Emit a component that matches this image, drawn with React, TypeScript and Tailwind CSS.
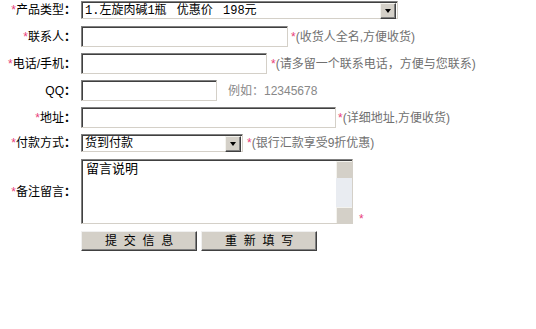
import React from "react";

const FONT = { fontFamily: '"Liberation Sans", "Noto Sans CJK SC", sans-serif' };
const MONO = { fontFamily: '"Liberation Mono", "Noto Sans CJK SC", monospace' };

function Star() {
  return <span className="text-[#e8407a]" style={{ fontFamily: '"Liberation Sans", sans-serif' }}>*</span>;
}

function Label({ star = true, children }: { star?: boolean; children: React.ReactNode }) {
  return (
    <div className="w-[76px] shrink-0 text-right text-[12px] leading-[14px] text-black whitespace-nowrap">
      {star && <Star />}
      {children}
      <span className="font-bold">：</span>
    </div>
  );
}

function Input({ w }: { w: string }) {
  return (
    <div
      className={`${w} ml-[5px] h-[21px] shrink-0 bg-white border border-t-[#808080] border-l-[#808080] border-r-[#d4d0c8] border-b-[#d4d0c8] shadow-[inset_1px_1px_0_#404040]`}
    />
  );
}

function Arrow() {
  return (
    <div className="w-[16px] h-[16px] shrink-0 bg-[#d4d0c8] border border-t-[#f4f3ee] border-l-[#f4f3ee] border-r-[#404040] border-b-[#404040] shadow-[inset_-1px_-1px_0_#808080] flex items-center justify-center">
      <div className="w-0 h-0 border-l-[3.5px] border-r-[3.5px] border-t-[4px] border-l-transparent border-r-transparent border-t-black mt-[1px]" />
    </div>
  );
}

function Select({ w, text }: { w: string; text: string }) {
  return (
    <div
      className={`${w} ml-[5px] h-[18px] shrink-0 bg-white border border-t-[#808080] border-l-[#808080] border-r-[#d4d0c8] border-b-[#d4d0c8] shadow-[inset_1px_1px_0_#404040] flex items-center pl-[2px] pr-[1px] pt-[1px]`}
    >
      <div className="flex-1 text-[12px] leading-[14px] text-black whitespace-pre pl-[1px] [word-spacing:3px]" style={MONO}>
        {text}
      </div>
      <Arrow />
    </div>
  );
}

function Note({ ml, children }: { ml: string; children: React.ReactNode }) {
  return (
    <span className={`${ml} text-[12px] leading-[14px] text-[#707070] whitespace-nowrap`}>
      <Star />
      {children}
    </span>
  );
}

function Btn({ children }: { children: React.ReactNode }) {
  return (
    <div className="w-[116px] h-[20px] bg-[#d4d0c8] border border-t-[#f0f0f0] border-l-[#f0f0f0] border-r-[#404040] border-b-[#404040] shadow-[inset_-1px_-1px_0_#808080] flex items-center justify-center text-[12px] leading-[14px] text-black whitespace-pre tracking-[1.7px] pl-[2px]">
      {children}
    </div>
  );
}

export default function App() {
  return (
    <div className="w-[536px] h-[329px] bg-white" style={FONT}>
      <div className="flex flex-col pt-[1px]">
        <div className="flex items-center h-[18px]">
          <Label>产品类型</Label>
          <Select w="w-[317px]" text="1.左旋肉碱1瓶 优惠价 198元" />
        </div>
        <div className="flex items-center h-[21px] mt-[7px]">
          <Label>联系人</Label>
          <Input w="w-[207px]" />
          <Note ml="ml-[3px]">(收货人全名,方便收货)</Note>
        </div>
        <div className="flex items-center h-[21px] mt-[6px]">
          <Label>电话/手机</Label>
          <Input w="w-[186px]" />
          <Note ml="ml-[4px]">(请多留一个联系电话，方便与您联系)</Note>
        </div>
        <div className="flex items-center h-[21px] mt-[6px]">
          <Label star={false}>QQ</Label>
          <Input w="w-[136px]" />
          <span className="ml-[11px] text-[12px] leading-[14px] text-[#888] whitespace-nowrap">例如：12345678</span>
        </div>
        <div className="flex items-center h-[21px] mt-[6px]">
          <Label>地址</Label>
          <Input w="w-[255px]" />
          <Note ml="ml-[2px]">(详细地址,方便收货)</Note>
        </div>
        <div className="flex items-center h-[18px] mt-[6px]">
          <Label>付款方式</Label>
          <Select w="w-[162px]" text="货到付款" />
          <Note ml="ml-[4px]">(银行汇款享受9折优惠)</Note>
        </div>
        <div className="flex items-center h-[65px] mt-[7px]">
          <Label>备注留言</Label>
          <div className="w-[272px] h-[65px] ml-[5px] shrink-0 flex bg-white border border-t-[#808080] border-l-[#808080] border-r-[#d4d0c8] border-b-[#d4d0c8] shadow-[inset_1px_1px_0_#404040]">
            <div className="flex-1 pl-[4px] pt-[2px] text-[13px] leading-[15px] text-black" style={MONO}>
              留言说明
            </div>
            <div className="w-[16px] flex flex-col mt-[1px]">
              <div className="h-[17px] bg-[#d4d0c8] border-l border-t border-[#f4f3ee]" />
              <div className="flex-1 bg-[#e9ecf1]" />
              <div className="h-[16px] bg-[#d4d0c8] border-l border-t border-[#f4f3ee]" />
            </div>
          </div>
          <span className="self-end ml-[6px] text-[12px] leading-[14px] mb-[-2px]">
            <Star />
          </span>
        </div>
        <div className="flex items-center h-[20px] mt-[7px] pl-[81px] gap-[4px]">
          <Btn>提 交 信 息</Btn>
          <Btn>重 新 填 写</Btn>
        </div>
      </div>
    </div>
  );
}
